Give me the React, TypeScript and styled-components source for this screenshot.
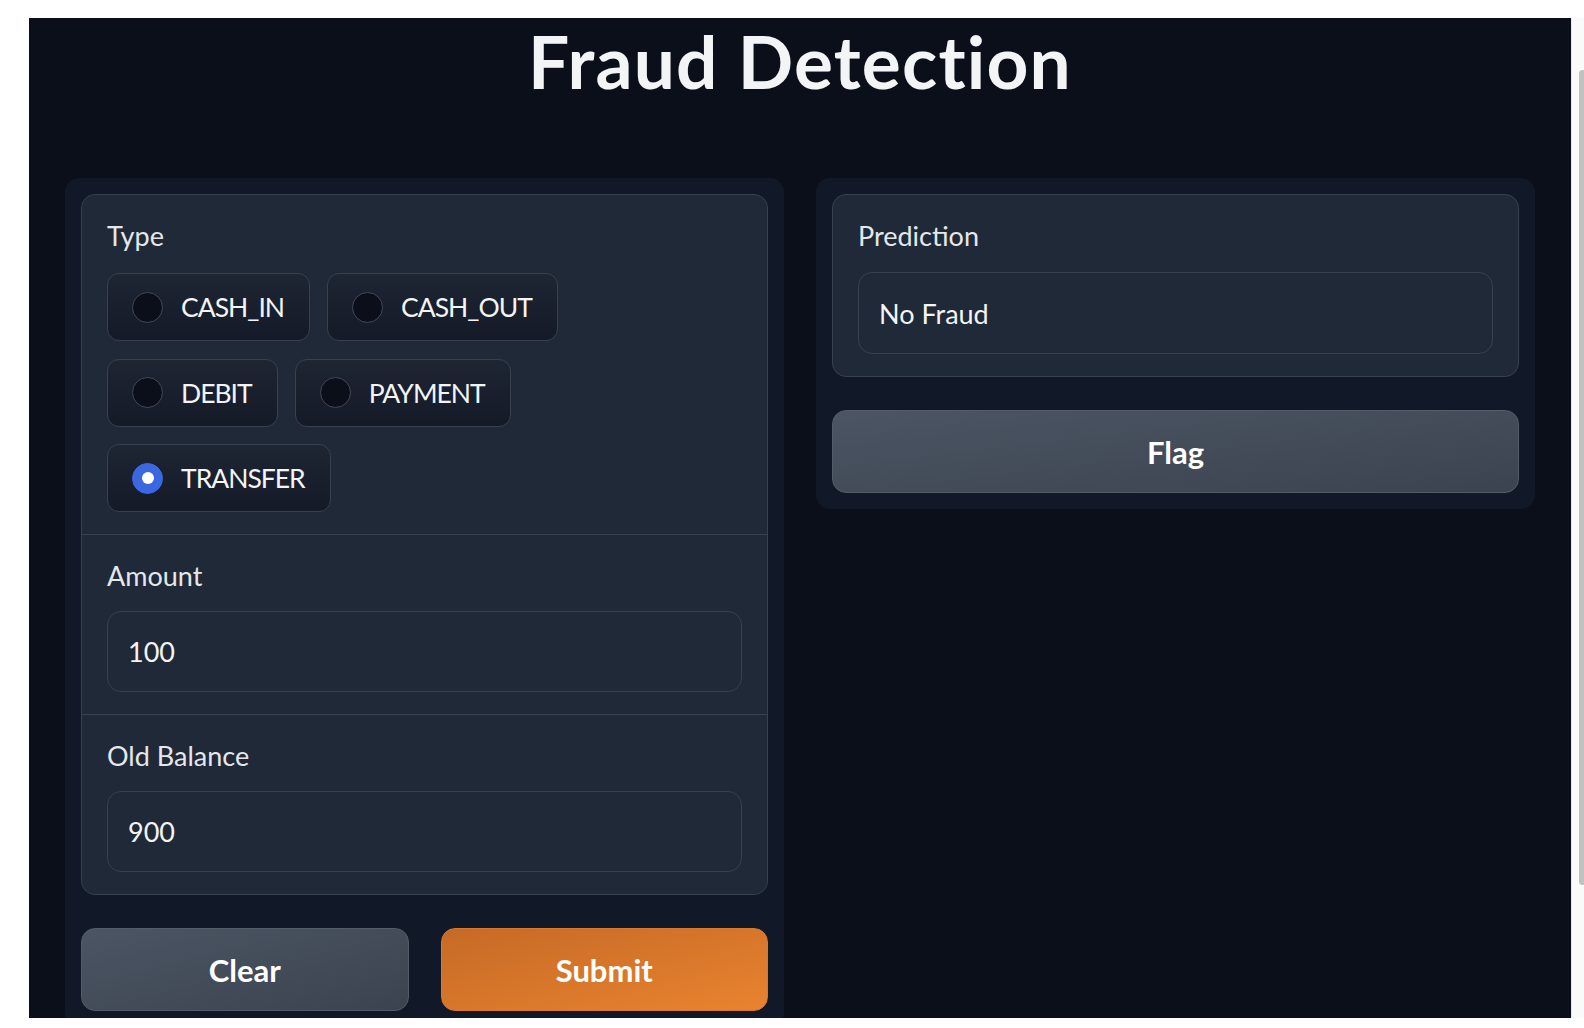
import React from "react";
import styled, { createGlobalStyle } from "styled-components";

const GlobalStyle = createGlobalStyle`
  html, body {
    margin: 0;
    padding: 0;
    background: #ffffff;
    overflow: hidden;
  }
  body {
    font-family: Lato, "Open Sans", sans-serif;
  }
  * { box-sizing: border-box; }
`;

const Page = styled.div`
  width: 1584px;
  height: 1028px;
  padding: 18px 0 0 29px;
  overflow: hidden;
`;

const Frame = styled.div`
  display: flex;
  width: 1555px;
  height: 1000px;
  overflow: hidden;
`;

const AppArea = styled.main`
  flex: 0 0 1542px;
  background: #0b0f19;
  padding: 0 36px;
  display: flex;
  flex-direction: column;
  overflow: hidden;
`;

const Title = styled.h1`
  margin: 0 0 74px;
  font-family: Lato, sans-serif;
  font-weight: 700;
  font-size: 73px;
  line-height: 86px;
  letter-spacing: 1.2px;
  text-align: center;
  color: #f3f4f6;
`;

const Columns = styled.div`
  display: grid;
  grid-template-columns: 1fr 1fr;
  gap: 32px;
  align-items: start;
`;

const Panel = styled.section`
  background: #111827;
  border-radius: 14px;
  padding: 16px;
  display: flex;
  flex-direction: column;
  gap: 33px;
`;

const Form = styled.div`
  border: 1px solid #374151;
  border-radius: 14px;
  overflow: hidden;
  display: flex;
  flex-direction: column;
  gap: 1px;
  background: #374151;
`;

const Block = styled.div`
  background: #1f2937;
  padding: 22px 25px;
`;

const Box = styled(Block)`
  border: 1px solid #374151;
  border-radius: 14px;
`;

const Label = styled.div<{ $gap: number }>`
  font-size: 27px;
  line-height: 37px;
  color: #e5e7eb;
  margin-bottom: ${(p) => p.$gap}px;
`;

const Options = styled.div`
  display: flex;
  flex-direction: column;
  gap: 17.5px;
`;

const OptionRow = styled.div`
  display: flex;
  gap: 17px;
`;

const Option = styled.label`
  height: 68px;
  display: flex;
  align-items: center;
  gap: 18px;
  padding: 0 25px 0 24px;
  border: 1px solid #374151;
  border-radius: 12px;
  background: linear-gradient(180deg, #1e2533 0%, #141a27 100%);
  font-size: 26.5px;
  letter-spacing: -1px;
  color: #f3f4f6;
  cursor: pointer;
`;

const Dot = styled.span<{ $checked: boolean }>`
  width: 31px;
  height: 31px;
  border-radius: 50%;
  flex: 0 0 31px;
  display: flex;
  align-items: center;
  justify-content: center;
  border: 1px solid ${(p) => (p.$checked ? "#3b68e0" : "#414958")};
  background: ${(p) => (p.$checked ? "#3b68e0" : "#0b0f19")};
  &::after {
    content: "";
    width: 12px;
    height: 12px;
    border-radius: 50%;
    background: ${(p) => (p.$checked ? "#ffffff" : "transparent")};
  }
`;

const Field = styled.input<{ $height: number }>`
  display: block;
  width: 100%;
  height: ${(p) => p.$height}px;
  border: 1px solid #374151;
  border-radius: 14px;
  background: #1f2937;
  padding: 0 20px;
  font-family: Lato, sans-serif;
  font-size: 27px;
  color: #f3f4f6;
  outline: none;
`;

const ButtonRow = styled.div`
  display: grid;
  grid-template-columns: 1fr 1fr;
  gap: 32px;
`;

const Button = styled.button<{ $variant: "primary" | "secondary" }>`
  height: 83px;
  border-radius: 14px;
  font-family: Lato, sans-serif;
  font-weight: 700;
  font-size: 31px;
  color: #ffffff;
  cursor: pointer;
  border: 1px solid ${(p) => (p.$variant === "primary" ? "#d7782c" : "#545c6a")};
  background: ${(p) =>
    p.$variant === "primary"
      ? "linear-gradient(to bottom right, #c56a26, #e9832f)"
      : "linear-gradient(to bottom right, #4b5563, #3c4350)"};
`;

const Scrollbar = styled.div`
  flex: 0 0 15px;
  background: #fafafa;
  border-left: 1px solid #e6e6e6;
  padding: 52px 0 0 7px;
`;

const Thumb = styled.div`
  width: 7px;
  height: 815px;
  border-radius: 4px;
  background: #c1c1c1;
`;

const rows = [["CASH_IN", "CASH_OUT"], ["DEBIT", "PAYMENT"], ["TRANSFER"]];

export default function App() {
  const selected = "TRANSFER";
  return (
    <>
      <GlobalStyle />
      <Page>
        <Frame>
          <AppArea>
            <Title>Fraud Detection</Title>
            <Columns>
              <Panel>
                <Form>
                  <Block>
                    <Label $gap={19}>Type</Label>
                    <Options>
                      {rows.map((row, i) => (
                        <OptionRow key={i}>
                          {row.map((opt) => (
                            <Option key={opt}>
                              <Dot $checked={opt === selected} />
                              {opt}
                            </Option>
                          ))}
                        </OptionRow>
                      ))}
                    </Options>
                  </Block>
                  <Block>
                    <Label $gap={17}>Amount</Label>
                    <Field $height={81} readOnly defaultValue="100" />
                  </Block>
                  <Block>
                    <Label $gap={17}>Old Balance</Label>
                    <Field $height={81} readOnly defaultValue="900" />
                  </Block>
                </Form>
                <ButtonRow>
                  <Button $variant="secondary">Clear</Button>
                  <Button $variant="primary">Submit</Button>
                </ButtonRow>
              </Panel>
              <Panel>
                <Box>
                  <Label $gap={18}>Prediction</Label>
                  <Field $height={82} readOnly defaultValue="No Fraud" />
                </Box>
                <Button $variant="secondary">Flag</Button>
              </Panel>
            </Columns>
          </AppArea>
          <Scrollbar>
            <Thumb />
          </Scrollbar>
        </Frame>
      </Page>
    </>
  );
}
